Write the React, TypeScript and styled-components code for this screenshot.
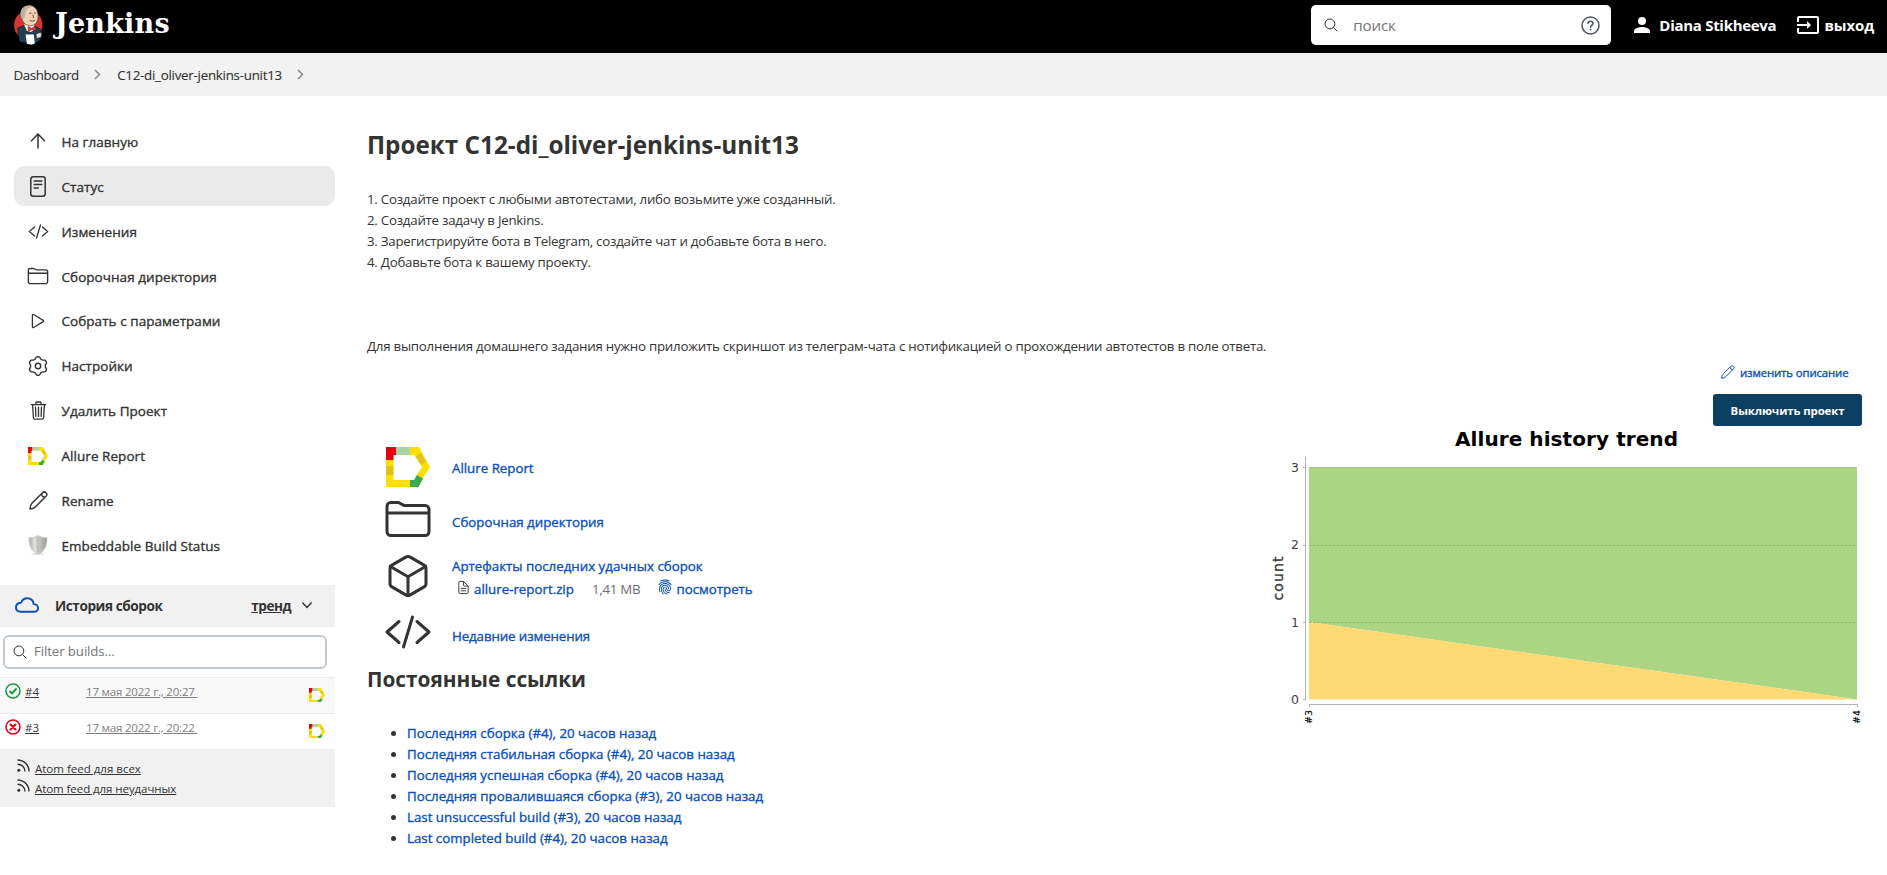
import React from "react";
import styled, { createGlobalStyle, css } from "styled-components";
import {
  IoCodeSlashOutline,
  IoCubeOutline,
  IoDocumentTextOutline,
  IoFingerPrint,
  IoFolderOutline,
  IoPlayOutline,
  IoSearchOutline,
  IoTrashOutline,
} from "react-icons/io5";

const GlobalStyle = createGlobalStyle`
  * { box-sizing: border-box; }
  body {
    margin: 0;
    background: #fff;
    color: #333;
    font-family: "Open Sans", "Noto Sans", sans-serif;
    font-size: 13.3px;
    line-height: 21px;
    overflow: hidden;
  }
  a { color: inherit; text-decoration: none; }
  svg { display: block; flex: none; }
`;

/* Open Sans has no medium cut here, so a hairline stroke stands in for it. */
const medium = css`
  font-weight: 400;
  -webkit-text-stroke: 0.35px currentColor;
`;

/* ---------- text ---------- */

const Text = styled.span<{ $ls?: number }>`
  white-space: nowrap;
  letter-spacing: ${(p) => p.$ls ?? 0}px;
`;

/* ---------- header ---------- */

const Header = styled.header`
  display: flex;
  align-items: flex-start;
  height: 53px;
  padding: 5px 13px 0 14px;
  background: #000;
  color: #fff;
`;

const Brand = styled.a`
  display: flex;
  gap: 12px;
  height: 40px;
  margin-right: auto;
`;

const BrandName = styled.span`
  font: bold 27px/37px "DejaVu Serif", serif;
  letter-spacing: 0.2px;
`;

const SearchBox = styled.div`
  display: flex;
  align-items: center;
  width: 300px;
  height: 40px;
  margin-right: 23px;
  padding: 0 11px 0 12px;
  border-radius: 5px;
  background: #fff;
  color: #333;
`;

const SearchHint = styled.span`
  flex: 1;
  margin-left: 14px;
  color: #757575;
  font-size: 15.2px;
  letter-spacing: -0.2px;
`;

const HeaderLink = styled.a<{ $gap: number; $ls: number }>`
  display: flex;
  align-items: center;
  gap: ${(p) => p.$gap}px;
  height: 40px;
  font-size: 15px;
  font-weight: 700;
  white-space: nowrap;
  letter-spacing: ${(p) => p.$ls}px;
  & + & { margin-left: 21px; }
`;

const Breadcrumbs = styled.nav`
  display: flex;
  align-items: center;
  height: 43px;
  padding: 1px 13.5px 0;
  background: #f2f2f2;
  font-size: 13.3px;
  -webkit-text-stroke: 0.12px currentColor;
`;

const CrumbArrow = styled.svg`
  margin: -2px 16px 0 15.5px;
`;

/* ---------- side panel ---------- */

const Page = styled.div`
  display: flex;
  align-items: flex-start;
`;

const Side = styled.aside`
  width: 335px;
  flex: none;
  margin-right: 32px;
`;

const Tasks = styled.nav`
  display: flex;
  flex-direction: column;
  gap: 4.9px;
  padding: 25.4px 0 0 14px;
`;

const Task = styled.a<{ $active?: boolean }>`
  display: grid;
  grid-template-columns: 24px 1fr;
  align-items: center;
  column-gap: 11.5px;
  height: 40px;
  padding: 2px 12px 0;
  border-radius: 10px;
  font-size: 13.5px;
  letter-spacing: 0.05px;
  ${medium}
  ${(p) => p.$active && css`background: #eaeaea;`}
  svg { justify-self: center; margin-top: -2px; }
`;

const History = styled.section`
  margin-top: 19.5px;
`;

const HistoryHead = styled.div`
  display: flex;
  align-items: center;
  height: 42px;
  padding: 0 23px 1px 15px;
  background: #f1f1f1;
  font-size: 13.6px;
  font-weight: 700;
`;

const HistoryTitle = styled.span`
  margin: 0 auto 0 16px;
  letter-spacing: -0.42px;
  white-space: nowrap;
`;

const Trend = styled.a`
  margin-right: 11px;
  text-decoration: underline;
  letter-spacing: -0.5px;
`;

const Filter = styled.div`
  display: flex;
  align-items: center;
  gap: 6px;
  width: 324px;
  height: 34px;
  margin: 8px 0 8px 3px;
  padding: 0 7px;
  border: 2px solid #c1cad0;
  border-radius: 6px;
  color: #757575;
  font-size: 13.3px;
  svg { color: #333; }
`;

const Build = styled.div<{ $shade?: boolean }>`
  display: flex;
  align-items: flex-start;
  height: 36px;
  padding: 5px 10px 0 5px;
  border-top: 1px solid #ececec;
  background: ${(p) => (p.$shade ? "#f8f8f8" : "#fff")};
  font-size: 11.5px;
  line-height: 18px;
`;

const BuildNo = styled.a`
  width: 61px;
  margin-left: 4px;
  text-decoration: underline;
`;

const BuildDate = styled.a`
  margin-right: auto;
  color: #808080;
  text-decoration: underline;
  white-space: pre;
  letter-spacing: -0.2px;
`;

const BuildBadge = styled.span`
  margin-top: 5px;
`;

const Feeds = styled.div`
  display: flex;
  flex-direction: column;
  height: 58px;
  padding: 10px 17px 0;
  background: #f1f1f1;
  font-size: 11.5px;
  line-height: 20px;
`;

const Feed = styled.a`
  display: flex;
  gap: 5px;
  height: 20px;
  text-decoration: underline;
`;

/* ---------- main panel ---------- */

const Main = styled.main`
  display: flex;
  flex-direction: column;
  flex: 1;
  padding: 31px 25px 0 0;
`;

const Title = styled.h1`
  margin: 0;
  font-size: 24.3px;
  line-height: 36px;
  font-weight: 700;
  white-space: nowrap;
  letter-spacing: -0.01px;
`;

const Description = styled.div`
  margin-top: 26px;
`;

const DescriptionLine = styled.div`
  height: 21px;
  white-space: nowrap;
  letter-spacing: -0.25px;
`;

const Actions = styled.div`
  display: flex;
  flex-direction: column;
  align-items: flex-end;
  margin-top: 6px;
`;

const EditLink = styled.a`
  display: flex;
  align-items: center;
  gap: 5px;
  height: 18px;
  margin-right: 13.5px;
  color: #0b4fb8;
  font-size: 11.4px;
  letter-spacing: -0.13px;
  ${medium}
`;

const DisableButton = styled.button`
  width: 149px;
  height: 32px;
  margin: 13px 0 1px;
  padding: 0;
  border: 0;
  border-radius: 3px;
  background: #0b3f62;
  color: #fff;
  font: 700 11.4px/34px "Open Sans", sans-serif;
  letter-spacing: -0.1px;
`;

const Body = styled.div`
  display: flex;
  justify-content: space-between;
  align-items: flex-start;
`;

const Summary = styled.div`
  padding-top: 14px;
`;

const SummaryRow = styled.div<{ $h: number; $drop: number }>`
  display: grid;
  grid-template-columns: 45px auto;
  column-gap: 22px;
  align-items: center;
  justify-content: start;
  height: ${(p) => p.$h}px;
  padding-left: 18px;
  > svg { justify-self: center; }
  > :last-child { padding-top: ${(p) => p.$drop}px; }
`;

const Link = styled.a<{ $ls?: number }>`
  color: #0b4fb8;
  white-space: nowrap;
  letter-spacing: ${(p) => p.$ls ?? 0}px;
  ${medium}
`;

const Artifact = styled.div`
  display: flex;
  align-items: center;
  gap: 3px;
  margin: 2px 0 0 4px;
  svg { margin-top: -5px; }
`;

const FileSize = styled.span`
  margin: 0 14px 0 15px;
  color: #6b6b75;
  white-space: nowrap;
  letter-spacing: -0.25px;
`;

const Subtitle = styled.h2`
  margin: 6px 0 0;
  font-size: 20.8px;
  line-height: 32px;
  font-weight: 700;
  white-space: nowrap;
`;

const Permalinks = styled.ul`
  margin: 28px 0 0;
  padding-left: 40px;
  li { height: 21px; }
`;

/* ---------- drawings ---------- */

const Butler = () => (
  <svg width="29" height="40" viewBox="0 0 29 40">
    <ellipse cx="14.3" cy="20" rx="14.2" ry="14.5" fill="#d33833" />
    <path d="M3.5 23 10 20.5h10l7 4 .6 8-4 5-9 1-9-2z" fill="#243f52" stroke="#0c1a24" strokeWidth=".6" />
    <path d="M10 19.5 13 26l4 1 4-3-1-6z" fill="#f4f0ea" />
    <path d="M6.8 8C7 3.500 10.500.5 15 .5c5.500 0 8.500 3.500 9 9 .4 4.500-.6 9.500-5.500 11-4.500 1-8.500-1.500-10-5C7.500 13 6.600 10.500 6.800 8z" fill="#efd2b5" stroke="#3a2d25" strokeWidth=".6" />
    <path d="M6.600 10C6 4 10 .5 15 .5c2 0 3.500.4 4.500 1.200C15 2 12 3.500 11.500 7.500L10.500 13 9 14.500C7.500 13.500 6.700 12 6.600 10z" fill="#b9b2a8" />
    <path d="M15 8.200h2.500M19.800 8h2.400M18.700 9.500l1 3.500M15.500 15.500q3 1.400 5.500-.2" fill="none" stroke="#4a3328" strokeWidth=".8" />
    <path d="m14 21.500 3.600 1.800 3.600-2.300.8 5-4-1.500-3.600 2z" fill="#d33833" stroke="#5c1512" strokeWidth=".4" />
    <path d="M11.500 29.500h8.300l1 9-3.200 1.300-4.600-1z" fill="#fff" />
    <path d="M22 29.500q3-2.500 5.500-1.500l-.5 4-4 1.500z" fill="#eee5dc" stroke="#26323a" strokeWidth=".5" />
  </svg>
);

const HelpIcon = () => (
  <svg width="19" height="19" viewBox="0 0 19 19" fill="none" stroke="#4d545d" strokeWidth="1.5">
    <circle cx="9.500" cy="9.500" r="8.500" />
    <path d="M7 7.600c0-1.500 1-2.400 2.500-2.400S12 6.100 12 7.400c0 1.700-2.400 1.900-2.400 3.900" strokeLinecap="round" />
    <circle cx="9.600" cy="13.600" r=".5" fill="#4d545d" strokeWidth=".8" />
  </svg>
);

const UserIcon = () => (
  <svg width="16" height="16" viewBox="0 0 16 16" fill="#fff">
    <circle cx="8" cy="4" r="4" />
    <path d="M0 16v-2c0-2.700 5.300-4 8-4s8 1.300 8 4v2z" />
  </svg>
);

const LogoutIcon = () => (
  <svg width="22" height="18" viewBox="0 0 22 18" fill="none" stroke="#fff" strokeWidth="2">
    <path d="M1 6V2q0-1 1-1h18q1 0 1 1v14q0 1-1 1H2q-1 0-1-1v-4M0 9h12" />
    <path d="m10 5 4 4-4 4z" fill="#fff" stroke="none" />
  </svg>
);

const Crumb = () => (
  <CrumbArrow width="7" height="11" viewBox="0 0 7 11" fill="none" stroke="#888" strokeWidth="1.500">
    <path d="m1 1 4.500 4.500L1 10" />
  </CrumbArrow>
);

const ArrowUpIcon = () => (
  <svg width="16" height="16" viewBox="0 0 16 16" fill="none" stroke="#333" strokeWidth="1.500" strokeLinecap="round" strokeLinejoin="round">
    <path d="M8 15V1M1.500 7.700 8 1l6.500 6.700" />
  </svg>
);

const StatusIcon = () => (
  <svg width="16" height="21" viewBox="0 0 16 21" fill="none" stroke="#333" strokeWidth="1.500" strokeLinecap="round">
    <rect x=".8" y=".8" width="14.400" height="19.400" rx="2.500" />
    <path d="M4.200 5h7.600M4.200 8.500h7.600M4.200 12h4" />
  </svg>
);

const gearOutline = Array.from({ length: 72 }, (_, i) => {
  const a = (i * Math.PI) / 36;
  const r = 8.35 + 0.95 * Math.tanh(2 * Math.cos(6 * a));
  return `${(10 + r * Math.sin(a)).toFixed(2)} ${(10 - r * Math.cos(a)).toFixed(2)}`;
}).join("L");

const GearIcon = () => (
  <svg width="20" height="20" viewBox="0 0 20 20" fill="none" stroke="#333" strokeWidth="1.400" strokeLinejoin="round">
    <path d={`M${gearOutline}Z`} />
    <circle cx="10" cy="10" r="2.700" />
  </svg>
);

const PencilIcon = ({ size = 20, color = "#333", stroke = 1.5 }) => (
  <svg width={size} height={size} viewBox="0 0 20 20" fill="none" stroke={color} strokeWidth={stroke} strokeLinejoin="round">
    <path d="M1 19c0-2.500.8-4.800 2.300-6.400L14 2c1.200-1.200 2.900-1.200 3.900-.2 1 1 1 2.600-.1 3.800L7.200 16.300C5.600 18 3.500 18.900 1 19z" />
    <path d="m13 3 1.200 2.700 2.700 1.200" />
  </svg>
);

const CloudIcon = () => (
  <svg width="24" height="16" viewBox="0 0 24 16" fill="none" stroke="#0b4fb8" strokeWidth="1.900" strokeLinejoin="round">
    <path d="M5.500 14.800h13.300c2.500 0 4.200-1.500 4.200-3.800 0-2.200-1.700-3.700-4.300-3.900C18.200 3.400 15.500 1.200 12.200 1.200c-2.800 0-5 1.600-6 4.300C3 5.900 1 7.700 1 10.300c0 2.700 1.900 4.500 4.500 4.500z" />
  </svg>
);

const AllureIcon = ({ size = 20 }) => (
  <svg width={size} height={(size * 40) / 44} viewBox="0 0 44 40">
    <path d="M0 12h7.500v21H24v7H0z" fill="#ffdf00" />
    <path d="M0 19h7.500v9H0z" fill="#e0c41c" />
    <path d="M0 0h10v8H7.500v5H0z" fill="#e8000f" />
    <path d="M10 0h15v8H10z" fill="#a8d3a4" />
    <path d="M24 0h9l11 20-7.500 12-6-4L36 20 28.500 8H24z" fill="#ffdf00" />
    <path d="m29.500 9.500 5.500-3.500 5 9-5.500 2.500z" fill="#e0c41c" />
    <path d="M24 33h4.200l2.600-5 6.400 3.500L32.500 40H24z" fill="#3dab49" />
  </svg>
);

const ShieldIcon = () => (
  <svg width="20" height="20" viewBox="0 0 20 20">
    <defs>
      <linearGradient id="steel" x1="0" x2="1">
        <stop offset="0" stopColor="#aaa" />
        <stop offset=".3" stopColor="#dedfdc" />
        <stop offset=".5" stopColor="#c9cac7" />
        <stop offset="1" stopColor="#9a9b98" />
      </linearGradient>
    </defs>
    <ellipse cx="10" cy="18.800" rx="7" ry="1.200" fill="#e6e6e6" />
    <path d="M1 2.500C4 2.800 7.500 2 10 .5c2.500 1.500 6 2.300 9 2 .3 8-2.500 14-9 17-6.500-3-9.300-9-9-17z" fill="url(#steel)" stroke="#c5c6c4" strokeWidth=".7" />
    <path d="M10 3v14" stroke="#999a98" strokeWidth=".8" strokeDasharray="1.500 1" />
  </svg>
);

const ResultIcon = ({ ok }: { ok: boolean }) => (
  <svg width="16" height="16" viewBox="0 0 16 16" fill="none" stroke={ok ? "#1e9a43" : "#e6001f"} strokeLinecap="round" strokeLinejoin="round">
    <circle cx="8" cy="8" r="7" strokeWidth="1.600" />
    {ok ? <path d="m5 8.500 2 2L11 6" strokeWidth="1.900" /> : <path d="m5.500 5.500 5 5m0-5-5 5" strokeWidth="2.100" />}
  </svg>
);

const FeedIcon = () => (
  <svg width="13" height="13" viewBox="0 0 13 13" fill="none" stroke="#333" strokeWidth="1.400">
    <path d="M.5 1C7 1 12 6 12 12.500M.5 5.200C4.700 5.200 8 8.300 8 12.500" />
    <circle cx="1.800" cy="11.200" r="1.500" fill="#333" stroke="none" />
  </svg>
);

const ChevronDown = () => (
  <svg width="10" height="7" viewBox="0 0 10 7" fill="none" stroke="#333" strokeWidth="1.500" strokeLinecap="round">
    <path d="m.8 1 4.200 4.500L9.200 1" />
  </svg>
);

const TrendChart = () => (
  <svg width="600" height="300" viewBox="0 0 600 300" fontFamily="DejaVu Sans, sans-serif">
    <text x="304.500" y="18.500" textAnchor="middle" fontSize="20" fontWeight="700" fill="#000" textLength="223">
      Allure history trend
    </text>
    <path d="M47 40h548v232.500L47 195z" fill="#acd583" />
    <path d="M47 195 595 272.500H47z" fill="#ffd973" />
    <g stroke="#97bd72" strokeWidth="1" strokeDasharray="2.500 1.500">
      <path d="M47 40.500h548M47 118.500h548M47 195.500h548" />
    </g>
    <path d="M43.500 29.500v244M41 40.500h3M41 118.500h3M41 195.500h3M41 272.500h3M47 277.500h549M47.500 277v3M595.500 277v3" fill="none" stroke="#b4b4b4" />
    <g fontSize="12.500" fill="#404040" textAnchor="end">
      <text x="37" y="45">3</text>
      <text x="37" y="122">2</text>
      <text x="37" y="200">1</text>
      <text x="37" y="277">0</text>
    </g>
    <text transform="translate(21 151.500) rotate(-90)" textAnchor="middle" fontSize="14" fill="#404040" stroke="#404040" strokeWidth=".4" textLength="44">
      count
    </text>
    <g fontSize="9.500" fill="#000" stroke="#000" strokeWidth=".15" textAnchor="end">
      <text transform="translate(50 283) rotate(-90)">#3</text>
      <text transform="translate(598 283) rotate(-90)">#4</text>
    </g>
  </svg>
);

/* ---------- data ---------- */

const tasks = [
  { label: "На главную", icon: <ArrowUpIcon /> },
  { label: "Статус", icon: <StatusIcon />, active: true },
  { label: "Изменения", icon: <IoCodeSlashOutline size={21} /> },
  { label: "Сборочная директория", icon: <IoFolderOutline size={22} /> },
  { label: "Собрать с параметрами", icon: <IoPlayOutline size={20} /> },
  { label: "Настройки", icon: <GearIcon /> },
  { label: "Удалить Проект", icon: <IoTrashOutline size={21} /> },
  { label: "Allure Report", icon: <AllureIcon size={20} /> },
  { label: "Rename", icon: <PencilIcon size={19} /> },
  { label: "Embeddable Build Status", icon: <ShieldIcon /> },
];

const description = [
  "1. Создайте проект с любыми автотестами, либо возьмите уже созданный.",
  "2. Создайте задачу в Jenkins.",
  "3. Зарегистрируйте бота в Telegram, создайте чат и добавьте бота в него.",
  "4. Добавьте бота к вашему проекту.",
  "",
  "",
  "",
  "Для выполнения домашнего задания нужно приложить скриншот из телеграм-чата с нотификацией о прохождении автотестов в поле ответа.",
];

const builds = [
  { no: "#4", ok: true, date: "17 мая 2022 г., 20:27 " },
  { no: "#3", ok: false, date: "17 мая 2022 г., 20:22 " },
];

const permalinks = [
  "Последняя сборка (#4), 20 часов назад",
  "Последняя стабильная сборка (#4), 20 часов назад",
  "Последняя успешная сборка (#4), 20 часов назад",
  "Последняя провалившаяся сборка (#3), 20 часов назад",
  "Last unsuccessful build (#3), 20 часов назад",
  "Last completed build (#4), 20 часов назад",
];

export default function App() {
  return (
    <>
      <GlobalStyle />
      <Header>
        <Brand>
          <Butler />
          <BrandName>Jenkins</BrandName>
        </Brand>
        <SearchBox>
          <IoSearchOutline size={16} />
          <SearchHint>поиск</SearchHint>
          <HelpIcon />
        </SearchBox>
        <HeaderLink $gap={9} $ls={-0.29}>
          <UserIcon />
          Diana Stikheeva
        </HeaderLink>
        <HeaderLink $gap={5} $ls={-0.1}>
          <LogoutIcon />
          выход
        </HeaderLink>
      </Header>
      <Breadcrumbs>
        <Text $ls={-0.38}>Dashboard</Text>
        <Crumb />
        <Text $ls={-0.24}>C12-di_oliver-jenkins-unit13</Text>
        <Crumb />
      </Breadcrumbs>
      <Page>
        <Side>
          <Tasks>
            {tasks.map((t) => (
              <Task key={t.label} $active={t.active}>
                {t.icon}
                <span>{t.label}</span>
              </Task>
            ))}
          </Tasks>
          <History>
            <HistoryHead>
              <CloudIcon />
              <HistoryTitle>История сборок</HistoryTitle>
              <Trend>тренд</Trend>
              <ChevronDown />
            </HistoryHead>
            <Filter>
              <IoSearchOutline size={16} />
              <Text $ls={-0.12}>Filter builds...</Text>
            </Filter>
            {builds.map((b) => (
              <Build key={b.no} $shade={b.ok}>
                <ResultIcon ok={b.ok} />
                <BuildNo>{b.no}</BuildNo>
                <BuildDate>{b.date}</BuildDate>
                <BuildBadge>
                  <AllureIcon size={16} />
                </BuildBadge>
              </Build>
            ))}
            <Feeds>
              <Feed>
                <FeedIcon />
                <Text>Atom feed для всех</Text>
              </Feed>
              <Feed>
                <FeedIcon />
                <Text $ls={-0.07}>Atom feed для неудачных</Text>
              </Feed>
            </Feeds>
          </History>
        </Side>
        <Main>
          <Title>Проект C12-di_oliver-jenkins-unit13</Title>
          <Description>
            {description.map((line, i) => (
              <DescriptionLine key={i}>{line}</DescriptionLine>
            ))}
          </Description>
          <Actions>
            <EditLink>
              <PencilIcon size={14} color="#0b4fb8" stroke={1.4} />
              изменить описание
            </EditLink>
            <DisableButton>Выключить проект</DisableButton>
          </Actions>
          <Body>
            <div>
              <Summary>
                <SummaryRow $h={52} $drop={2}>
                  <AllureIcon size={44} />
                  <Link>Allure Report</Link>
                </SummaryRow>
                <SummaryRow $h={52} $drop={6}>
                  <IoFolderOutline size={48} />
                  <Link>Сборочная директория</Link>
                </SummaryRow>
                <SummaryRow $h={62} $drop={4}>
                  <IoCubeOutline size={48} />
                  <div>
                    <Link>Артефакты последних удачных сборок</Link>
                    <Artifact>
                      <IoDocumentTextOutline size={15} />
                      <Link>allure-report.zip</Link>
                      <FileSize>1,41 MB</FileSize>
                      <IoFingerPrint size={16} color="#0b4fb8" />
                      <Link>посмотреть</Link>
                    </Artifact>
                  </div>
                </SummaryRow>
                <SummaryRow $h={50} $drop={8}>
                  <IoCodeSlashOutline size={48} />
                  <Link $ls={-0.1}>Недавние изменения</Link>
                </SummaryRow>
              </Summary>
              <Subtitle>Постоянные ссылки</Subtitle>
              <Permalinks>
                {permalinks.map((p) => (
                  <li key={p}>
                    <Link>{p}</Link>
                  </li>
                ))}
              </Permalinks>
            </div>
            <TrendChart />
          </Body>
        </Main>
      </Page>
    </>
  );
}
